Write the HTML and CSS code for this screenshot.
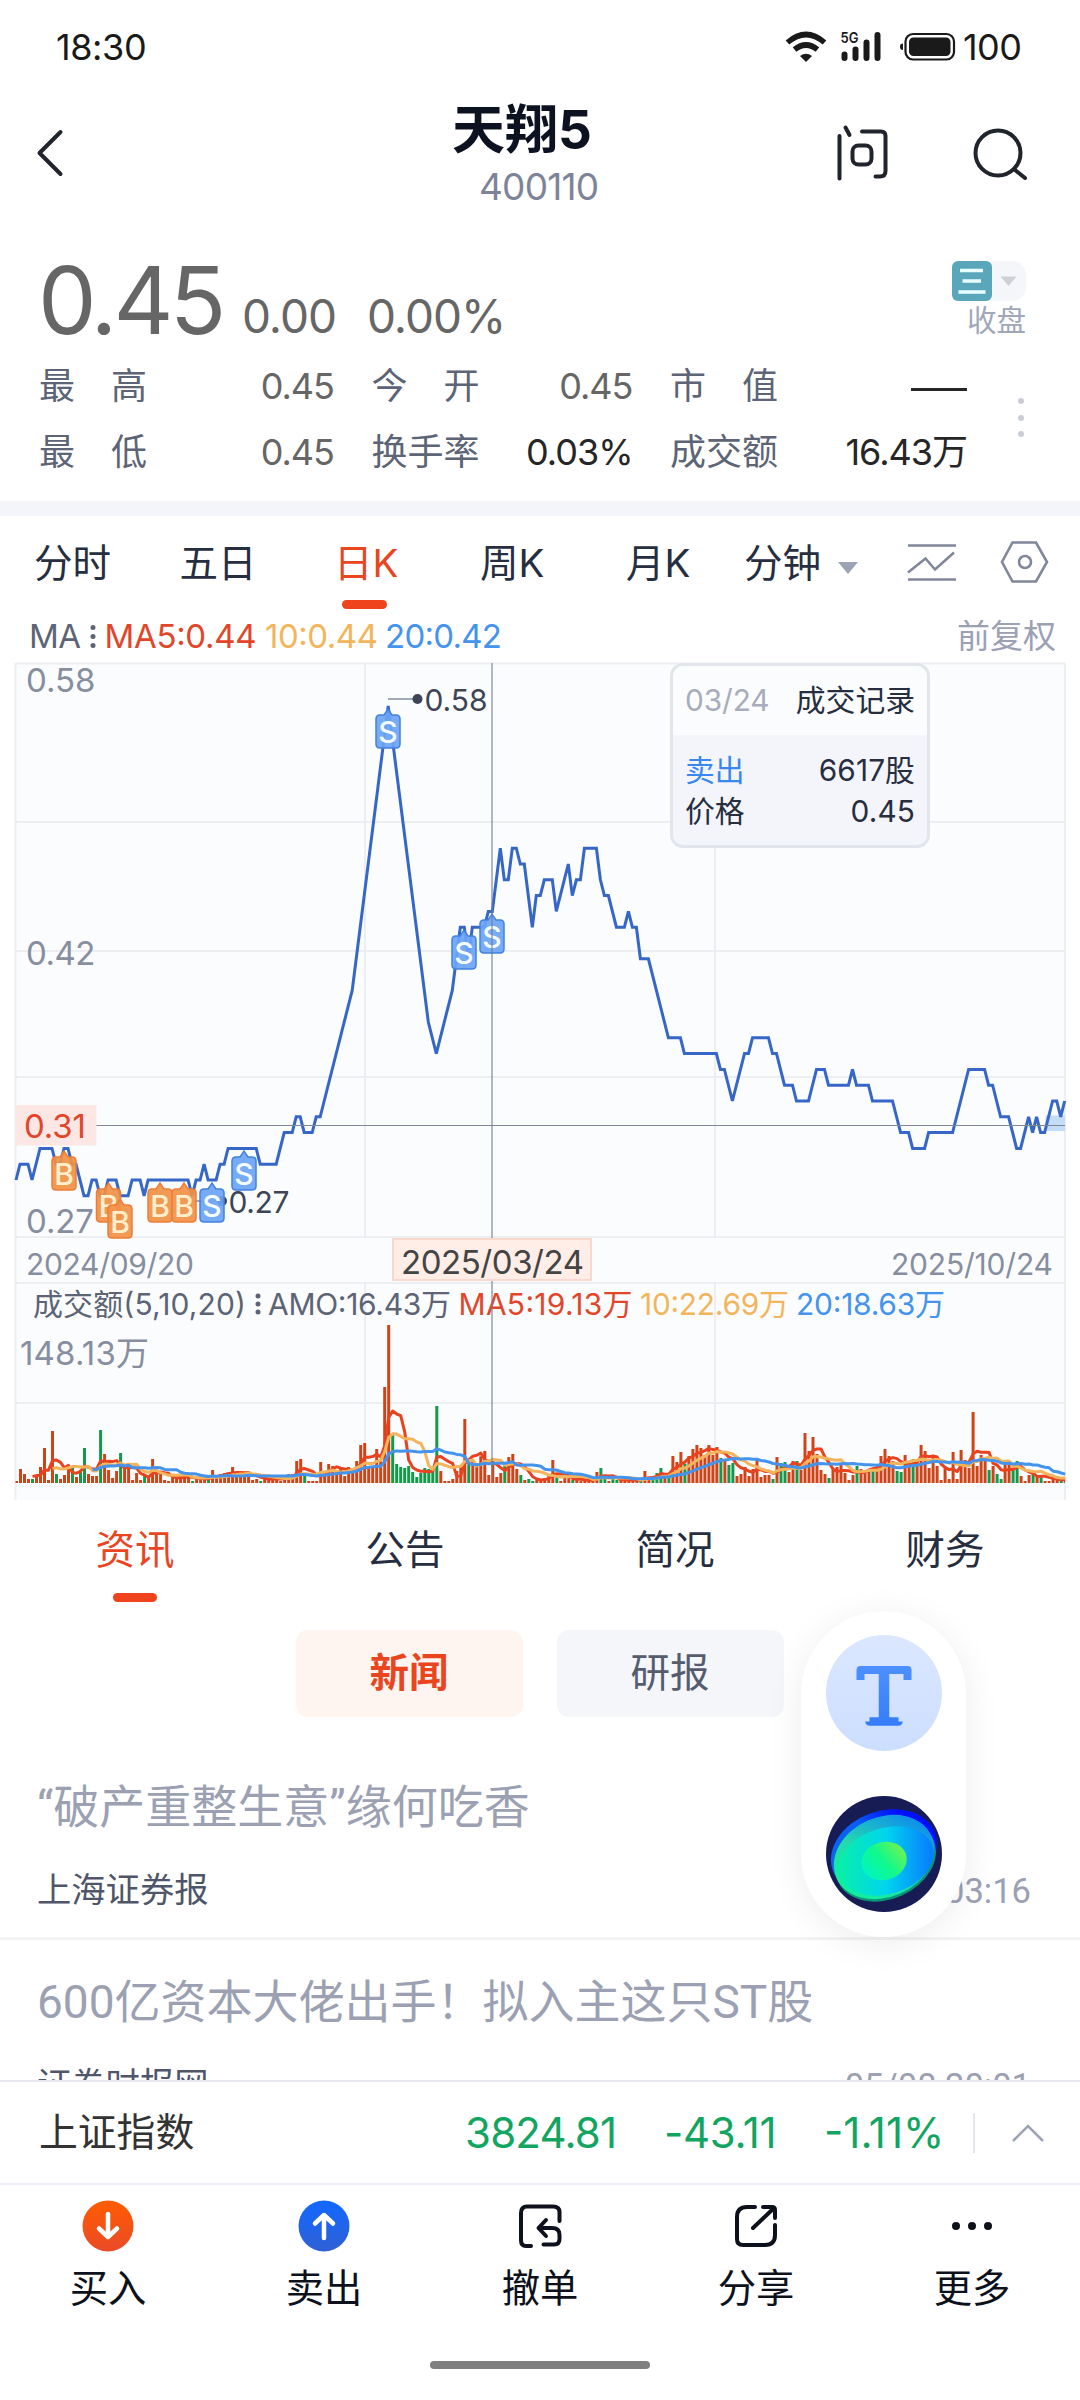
FILE: index.html
```html
<!DOCTYPE html>
<html lang="zh-CN">
<head>
<meta charset="utf-8">
<title>天翔5 400110</title>
<link rel="stylesheet" href="styles.css">
</head>
<body>
<header class="status">
  <span class="clock">18:30</span>
  <svg class="status-icons" viewBox="780 20 180 50" width="180" height="50">
    <g fill="none" stroke="#1a1a1a" stroke-width="5.6">
      <path d="M787.5 41.500Q806 25.500 824.500 41.500"/>
      <path d="M794.500 48.500Q806 39.500 817.500 48.500"/>
    </g>
    <path d="M800 55Q806 50.500 812 55L806 61Z" fill="#1a1a1a"/>
    <text x="840.500" y="42" class="net" textLength="18" lengthAdjust="spacingAndGlyphs">5G</text>
    <g stroke="#1a1a1a" stroke-width="6" stroke-linecap="round">
      <path d="M844.500 53.500V57M855.500 48.500V57M866.500 41.500V57M877.500 34V57"/>
    </g>
    <rect x="905.500" y="33" width="48.500" height="25.500" rx="7.500" fill="none" stroke="#1a1a1a" stroke-width="2.200"/>
    <rect x="909" y="36.500" width="41.500" height="18.500" rx="4.500" fill="#1a1a1a"/>
    <path d="M903 42.500Q900 42.500 900 45.700T903 49Z" fill="#1a1a1a"/>
  </svg>
  <span class="level">100</span>
</header>

<nav class="topbar">
  <svg class="back" viewBox="0 0 30 50" width="30" height="50"><path d="M25.500 4 4.500 25 25.500 46"/></svg>
  <div class="heading">
    <h1>天翔5</h1>
    <p>400110</p>
  </div>
  <svg class="ask" viewBox="0 0 56 60" width="56" height="60">
    <path d="M5.500 13V55.500M11.500 4.500 15.500 12M28 8.500H47Q51.500 8.500 51.500 13V48Q51.500 53.500 46 53.500H41.500"/>
    <rect x="18.500" y="22.500" width="19" height="19" rx="6"/>
  </svg>
  <svg class="search" viewBox="0 0 60 56" width="60" height="56"><circle cx="27" cy="27" r="22.500"/><path d="M43.500 43.500 54 52"/></svg>
</nav>

<section class="quote">
  <div class="price-row">
    <span class="price">0.45</span>
    <span class="change">0.00</span>
    <span class="percent">0.00%</span>
    <div class="market">
      <svg viewBox="0 0 74 40" width="74" height="40">
        <rect x="10" width="64" height="40" rx="14" fill="#f5f6f9"/>
        <rect width="40" height="40" rx="6" fill="#5aa7bb"/>
        <path d="M8 9.500H31M10.500 20H29M6.500 31H33.500" stroke="#e9ffff" stroke-width="3.500"/>
        <path d="M48.500 15.500H64.500L56.500 25Z" fill="#cdd0d6"/>
      </svg>
      <span>收盘</span>
    </div>
  </div>
  <div class="stats-wrap">
    <dl class="stats">
      <div><dt class="spread"><i>最</i><i>高</i></dt><dd>0.45</dd></div>
      <div><dt class="spread"><i>今</i><i>开</i></dt><dd>0.45</dd></div>
      <div><dt class="spread"><i>市</i><i>值</i></dt><dd><b class="dash"></b></dd></div>
      <div><dt class="spread"><i>最</i><i>低</i></dt><dd>0.45</dd></div>
      <div><dt>换手率</dt><dd class="dark">0.03%</dd></div>
      <div><dt>成交额</dt><dd class="dark">16.43万</dd></div>
    </dl>
    <div class="more-dots"><i></i><i></i><i></i></div>
  </div>
</section>

<nav class="periods">
  <a>分时</a><a>五日</a><a class="active">日K</a><a>周K</a><a>月K</a>
  <a class="minutes">分钟<svg viewBox="0 0 20 12" width="20" height="12"><path d="M0 0H20L10 12Z" fill="#9ba3b5"/></svg></a>
  <svg class="indicator" viewBox="0 0 50 42" width="50" height="42"><path d="M1 4.500H49M1 38.500H49M1 31.500 18.500 17.500 28 28.500 47 11.500"/></svg>
  <svg class="settings" viewBox="0 0 50 44" width="50" height="44"><path d="M12.500 2.500H36L47 22 36 41.500H12.500L2 22Z"/><circle cx="25" cy="22" r="6"/></svg>
</nav>

<main>
<div class="chart">
  <svg viewBox="0 616 1080 884" width="1080" height="884">
    <g font-size="33">
      <text x="29" y="648" textLength="52" fill="#5c6475">MA</text>
      <g fill="#5c6475"><circle cx="93" cy="627.500" r="2.500"/><circle cx="93" cy="636.500" r="2.500"/><circle cx="93" cy="645.500" r="2.500"/></g>
      <text x="104.500" y="648" textLength="152" fill="#e2462a">MA5:0.44</text>
      <text x="265" y="648" textLength="113" fill="#f3b55c">10:0.44</text>
      <text x="385" y="648" textLength="117" fill="#4493ec">20:0.42</text>
      <text x="957" y="648" textLength="99" fill="#9ba1b3">前复权</text>
    </g>

    <rect x="15.500" y="663" width="1049.500" height="837" fill="#fbfcfe"/>
    <g class="grid">
      <path d="M15.500 663.500H1065M15.500 663V1500M1065 663V1500" stroke-width="1"/>
      <path d="M15.500 822H1065M15.500 951H1065M15.500 1077H1065M15.500 1237H1065M15.500 1283H1065M15.500 1403H1065"/>
      <path d="M365 664V1237M715 664V1237M365 1283V1483M715 1283V1483"/>
    </g>

    <g fill="#868e9f" font-size="33">
      <text x="26" y="692" textLength="69.500">0.58</text>
      <text x="26" y="964.500" textLength="69.500">0.42</text>
      <text x="26" y="1232.500" textLength="68">0.27</text>
      <text x="20" y="1364.500" textLength="129">148.13万</text>
    </g>
    <g fill="#868e9f" font-size="30">
      <text x="26" y="1274.500" textLength="168">2024/09/20</text>
      <text x="891" y="1274.500" textLength="162">2025/10/24</text>
    </g>

    <rect x="1045.500" y="1115.500" width="19.500" height="15.500" fill="#c3dcf8"/>
    <polyline id="price-line" class="price-line"/>
    <path d="M96 1125.500H1065" stroke="#7f8799" stroke-width="1.200"/>
    <rect x="16" y="1105" width="80.500" height="40.500" fill="#fde7e4"/>
    <text x="24" y="1137.500" textLength="62" font-size="33" fill="#e2462a">0.31</text>

    <path d="M388 699H414M194 1201H222" stroke="#868e9f" stroke-width="1.500"/>
    <g fill="#3d4455" font-size="30">
      <circle cx="417.500" cy="699" r="5"/><text x="424.500" y="711" textLength="63">0.58</text>
      <circle cx="222" cy="1201" r="5"/><text x="228.500" y="1212.500" textLength="61">0.27</text>
    </g>
    <g id="marks"></g>

    <g id="volume"></g>
    <g font-size="30">
      <text x="33" y="1315" textLength="213" fill="#5c6475">成交额(5,10,20)</text>
      <g fill="#5c6475"><circle cx="258" cy="1296" r="2.500"/><circle cx="258" cy="1304" r="2.500"/><circle cx="258" cy="1312" r="2.500"/></g>
      <text x="268" y="1315" textLength="183" fill="#5c6475">AMO:16.43万</text>
      <text x="458.500" y="1315" textLength="174" fill="#e2462a">MA5:19.13万</text>
      <text x="640" y="1315" textLength="149" fill="#f3b55c">10:22.69万</text>
      <text x="796" y="1315" textLength="149" fill="#4493ec">20:18.63万</text>
    </g>

    <rect x="393" y="1239" width="198" height="41" fill="#ffeee7" stroke="#fad8ce" stroke-width="2"/>
    <path d="M492 663V1238M492 1281V1483" stroke="#757d8d" stroke-opacity=".55" stroke-width="2"/>
    <text x="401" y="1273.500" textLength="183" font-size="33" fill="#444">2025/03/24</text>
  </svg>
  <div class="trade-tip">
    <div class="tip-head"><span>03/24</span><b>成交记录</b></div>
    <div class="tip-body">
      <p><em>卖出</em><span>6617股</span></p>
      <p><span>价格</span><span>0.45</span></p>
    </div>
  </div>
</div>

<nav class="sections"><a class="active">资讯</a><a>公告</a><a>简况</a><a>财务</a></nav>
<div class="filters"><a class="active">新闻</a><a>研报</a></div>
<div class="news">
  <article><h2>“破产重整生意”缘何吃香</h2><p><span>上海证券报</span><time>05/08 03:16</time></p></article>
  <article><h2>600亿资本大佬出手！拟入主这只ST股</h2><p><span>证券时报网</span><time>05/08 20:01</time></p></article>
</div>
</main>

<aside class="float">
  <svg viewBox="0 0 116 116" width="116" height="116">
    <defs>
      <linearGradient id="pale" x1="0" y1="0" x2="0" y2="1"><stop offset="0" stop-color="#dbe7ff"/><stop offset="1" stop-color="#ccdeff"/></linearGradient>
      <linearGradient id="azure" gradientUnits="userSpaceOnUse" x1="0" y1="31" x2="0" y2="91"><stop offset="0" stop-color="#4d90ff"/><stop offset="1" stop-color="#357df8"/></linearGradient>
    </defs>
    <circle cx="58" cy="58" r="58" fill="url(#pale)"/>
    <g fill="none" stroke="url(#azure)" stroke-linejoin="round">
      <path d="M34.500 45V35H81.500V45" stroke-width="8"/>
      <path d="M58 35V87" stroke-width="10.500"/>
      <path d="M43.500 86.500V86.600H72.500V86.500" stroke-width="8.500"/>
    </g>
  </svg>
  <svg viewBox="0 0 116 116" width="116" height="116">
    <defs>
      <linearGradient id="rim" x1="0" y1=".6" x2="1" y2=".2"><stop offset="0" stop-color="#0a68ee"/><stop offset=".5" stop-color="#0a5cf5"/><stop offset=".8" stop-color="#0010ff"/></linearGradient>
      <linearGradient id="shell" x1="0" y1=".8" x2="1" y2=".2"><stop offset="0" stop-color="#0cf49a"/><stop offset=".45" stop-color="#25d9ad"/><stop offset="1" stop-color="#0c84f5"/></linearGradient>
      <linearGradient id="body" x1="0" y1=".4" x2="1" y2=".6"><stop offset="0" stop-color="#08f0a6"/><stop offset=".5" stop-color="#00d5ee"/><stop offset="1" stop-color="#0878ff"/></linearGradient>
      <linearGradient id="core" x1="0" y1=".7" x2="1" y2=".3"><stop offset="0" stop-color="#00f5c4"/><stop offset=".5" stop-color="#10f98c"/><stop offset="1" stop-color="#72f250"/></linearGradient>
      <clipPath id="disc"><circle cx="58" cy="58" r="58"/></clipPath>
    </defs>
    <g clip-path="url(#disc)">
      <rect width="116" height="116" fill="#171c55"/>
      <ellipse cx="58" cy="56" rx="54.500" ry="41" transform="rotate(-20 58 56)" fill="url(#rim)"/>
      <ellipse cx="60" cy="65" rx="52" ry="38" transform="rotate(-24 60 65)" fill="#0b9677"/>
      <ellipse cx="58" cy="61" rx="52" ry="40" transform="rotate(-24 58 61)" fill="url(#shell)"/>
      <ellipse cx="60" cy="65" rx="49" ry="33" transform="rotate(-17 60 65)" fill="url(#body)"/>
      <ellipse cx="58" cy="65" rx="23" ry="19" transform="rotate(-15 58 65)" fill="url(#core)"/>
    </g>
  </svg>
</aside>

<footer>
  <div class="index-bar">
    <span class="name">上证指数</span>
    <span class="v1">3824.81</span><span class="v2">-43.11</span><span class="v3">-1.11%</span>
    <i class="sep"></i>
    <svg viewBox="0 0 34 20" width="34" height="20"><path d="M2 18 17 3 32 18" fill="none" stroke="#9ba3b5" stroke-width="2.500"/></svg>
  </div>
  <div class="actions">
    <a><svg viewBox="0 0 52 52"><defs><linearGradient id="buy" x1="0" y1="0" x2="0" y2="1"><stop offset="0" stop-color="#ff5c00"/><stop offset="1" stop-color="#ea4a28"/></linearGradient></defs><circle cx="26" cy="26" r="25.500" fill="url(#buy)"/><path d="M26 14V36M17 28.500 26 37 35 28.500" class="w"/></svg>买入</a>
    <a><svg viewBox="0 0 52 52"><defs><linearGradient id="sell" x1="0" y1="0" x2="0" y2="1"><stop offset="0" stop-color="#1268ff"/><stop offset="1" stop-color="#2f60d4"/></linearGradient></defs><circle cx="26" cy="26" r="25.500" fill="url(#sell)"/><path d="M26 38V16M17 23.500 26 15 35 23.500" class="w"/></svg>卖出</a>
    <a><svg viewBox="0 0 52 52"><path class="k" d="M17 46H12Q7 46 7 40V13Q7 6.500 13 6.500H39Q45.500 6.500 45.500 12V21M32 20 24.500 28 32 36M25 28H38Q45.500 28 45.500 35V39Q45.500 44.500 40 44.500H29.500"/></svg>撤单</a>
    <a><svg viewBox="0 0 52 52"><path class="k" d="M25 7H17Q7 7 7 17V39Q7 45 13 45H35Q45 45 45 35V25M33 7H42Q45 7 45 10V18M44 8 23 28"/></svg>分享</a>
    <a><svg viewBox="0 0 52 52"><circle cx="10" cy="26" r="4" fill="#0d111b"/><circle cx="26" cy="26" r="4" fill="#0d111b"/><circle cx="42" cy="26" r="4" fill="#0d111b"/></svg>更多</a>
  </div>
  <div class="home-bar"></div>
</footer>
<script src="chart.js"></script>
</body>
</html>
```

FILE: styles.css
```css
* { box-sizing: border-box; }
body {
  margin: 0; width: 1080px; height: 2400px; position: relative; overflow: hidden;
  background: #fff; color: #262e40; display: flex; flex-direction: column;
  font-family: Inter, "Noto Sans CJK SC", sans-serif; font-size: 36px; line-height: 1;
}
h1, h2, p, dl, dd { margin: 0; font-weight: 400; }
i, em { font-style: normal; }
svg { display: block; flex: none; }

.status { height: 92px; padding: 0 56px 0 56px; display: flex; align-items: center; color: #1a1a1a; font-size: 36px; flex: none; }
.clock { letter-spacing: -.4px; padding-top: 2px; }
.status-icons { margin-left: auto; }
.level { width: 64px; padding: 1px 0 0 3px; letter-spacing: -.6px; }
.net { font-size: 15px; font-weight: 600; fill: #1a1a1a; }

.topbar { height: 138px; flex: none; display: flex; align-items: flex-start; padding: 0 49px 0 35px; }
.topbar svg { fill: none; stroke: #20242c; stroke-width: 4; stroke-linecap: round; stroke-linejoin: round; }
.back { margin-top: 36px; }
.heading { flex: 1; margin-left: 387px; padding-top: 10px; }
.heading h1 { font-size: 53px; font-weight: 700; line-height: 56px; color: #0c1220; }
.heading p { margin: 9px 0 0 27px; font-size: 37px; line-height: 40px; color: #7d849a; letter-spacing: -.8px; }
.ask { margin: 31px 81px 0 0; }
.search { margin-top: 34px; }

.quote { height: 271px; flex: none; padding: 0 54px 0 40px; }
.price-row { height: 126px; display: flex; align-items: flex-end; color: #666; padding-bottom: 16px; }
.price { font-size: 93px; line-height: 93px; letter-spacing: -3.800px; height: 86px; width: 204px; margin-left: -2px; }
.change, .percent { font-size: 46px; line-height: 46px; letter-spacing: -1px; padding-bottom: 1px; }
.change { width: 125px; }
.market { margin: 0 0 5px auto; display: flex; flex-direction: column; align-items: flex-end; gap: 5px; font-size: 29.500px; color: #a0a7b8; }
.stats-wrap { display: flex; }
.stats { width: 928px; display: grid; grid-template-columns: 295px 261px 297px; column-gap: 37.500px; grid-auto-rows: 66px; margin-left: -1px; }
.stats div { display: flex; justify-content: space-between; align-items: center; padding-top: 7px; height: 52px; }
.stats dt { color: #5c6475; width: 108px; }
.stats .spread { display: flex; justify-content: space-between; }
.stats dd { color: #666; letter-spacing: -1px; display: flex; align-items: center; }
.stats dd.dark { color: #262626; }
.dash { width: 56px; height: 3px; background: #262626; margin-top: 7px; }
.more-dots { margin: 42px 2px 0 auto; width: 6px; display: flex; flex-direction: column; gap: 10.500px; }
.more-dots i { width: 6px; height: 6px; border-radius: 3px; background: #c9cdd8; }

.periods { height: 115px; flex: none; border-top: 15px solid #f4f5fa; padding: 0 30px 0 34px; display: flex; font-size: 38.500px; color: #262e40; }
.periods a { position: relative; width: 146px; height: 100px; padding-top: 28px; }
.periods a:nth-child(-n+2) { width: 145.500px; }
.periods a:nth-child(n+4):nth-child(-n+5) { padding-left: 9px; }
.periods a.minutes { width: 160px; padding-left: 0; margin-left: -19px; display: flex; gap: 17px; }
.minutes svg { margin-top: 18px; }
.active { color: #e9461f; }
.periods .active::after { content: ""; position: absolute; left: 17px; top: 84px; width: 45px; height: 9px; border-radius: 5px; background: #ee431c; }
.periods a.active { padding-left: 9px; }
.indicator { margin: 25px 0 0 auto; }
.settings { margin: 24px 0 0 43px; }
.indicator, .settings { fill: none; stroke: #7f8799; stroke-width: 2.600; }

main { display: contents; }
.chart { position: relative; height: 884px; flex: none; }
.grid path { stroke: #eceef2; stroke-width: 2; fill: none; }
.price-line { fill: none; stroke: #3566c8; stroke-width: 3; stroke-linejoin: miter; }
.chart svg { overflow: visible; }
.mark text { font-size: 30px; font-weight: 500; text-anchor: middle; }
.mark path { stroke-width: 1.500; }
.mark.sell path { fill: #6ba4f5; stroke: #4281e0; fill-opacity: .92; }
.mark.sell text { fill: #f4fbff; }
.mark.buy path { fill: #f09148; stroke: #ef7d35; fill-opacity: .92; }
.mark.buy text { fill: #fff0cd; }
.trade-tip { position: absolute; left: 670px; top: 47px; width: 260px; height: 185px; border: 3px solid #e2e5eb; border-radius: 13px; background: #f4f5fa; overflow: hidden; font-size: 29.800px; }
.tip-head { height: 69px; padding: 0 12px 0 12px; background: #fbfcfe; display: flex; justify-content: space-between; align-items: center; }
.tip-head span { color: #a7adba; letter-spacing: -.1px; }
.tip-head b { font-weight: 400; }
.tip-body { padding: 15px 12px 0 12px; }
.tip-body p { display: flex; justify-content: space-between; line-height: 41px; }
.tip-body p span:last-child { letter-spacing: .1px; }
.tip-body em { color: #3a87ee; }

.sections { height: 130px; flex: none; display: flex; font-size: 39.500px; }
.sections a { width: 270px; text-align: center; padding-top: 31px; position: relative; }
.sections .active::after { content: ""; position: absolute; left: 113px; top: 93px; width: 44px; height: 9px; border-radius: 5px; background: #ee431c; }
.filters { height: 87px; flex: none; display: flex; gap: 34px; padding-left: 296px; font-size: 39.500px; }
.filters a { width: 227px; border-radius: 12px; background: #f4f6fa; color: #545c6e; text-align: center; line-height: 87px; padding-right: 1px; }
.filters .active { background: #fff5f0; color: #e9461f; font-weight: 700; }
.news { height: 363px; flex: none; overflow: hidden; font-family: Roboto, "Noto Sans CJK SC", sans-serif; padding-top: 28px; }
.news article { height: 195px; padding: 39px 49px 0 37px; border-bottom: 3px solid #f3f3f3; }
.news h2 { font-size: 46px; line-height: 46px; color: #9ba1b3; white-space: nowrap; }
.news p { display: flex; justify-content: space-between; margin-top: 43px; font-size: 34.300px; line-height: 34px; color: #4f5669; }
.news time { color: #9ba1b3; font-size: 34.500px; line-height: 36px; }

.float { position: absolute; left: 801px; top: 1611px; width: 165px; height: 326px; border-radius: 83px; background: #fff; box-shadow: 0 6px 36px rgba(0,0,0,.075); display: flex; flex-direction: column; align-items: center; gap: 45px; padding-top: 24px; }

footer { flex: 1; border-top: 2px solid #e7e8ee; background: #fff; }
.index-bar { height: 101px; display: flex; align-items: center; padding-left: 39px; color: #12a562; font-size: 42px; }
.index-bar .name { width: 426px; font-size: 38.800px; color: #333; }
.index-bar .v1 { width: 199px; letter-spacing: -.8px; }
.index-bar .v2 { width: 160px; letter-spacing: -.3px; }
.index-bar .v3 { width: 149px; letter-spacing: 0; }
.sep { width: 2px; height: 40px; background: #e3e6ec; margin-right: 36px; }
.actions { height: 129px; border-top: 2px solid #edf0f6; display: flex; padding-top: 15px; color: #0d111b; font-size: 38.300px; }
.actions a { width: 216px; display: flex; flex-direction: column; align-items: center; gap: 17px; }
.actions svg { width: 52px; height: 52px; }
.w { fill: none; stroke: #fff; stroke-width: 4.500; stroke-linecap: round; stroke-linejoin: round; }
.k { fill: none; stroke: #0d111b; stroke-width: 4; stroke-linecap: round; stroke-linejoin: round; }
.home-bar { width: 220px; height: 8px; border-radius: 4px; background: #808080; margin: 49px auto 0; }
```

FILE: chart.js
```js
const NS = 'http://www.w3.org/2000/svg';
const DAY = 4.0025;
const LEFT = 16;

function add(parent, tag, attrs) {
  const el = document.createElementNS(NS, tag);
  for (const key in attrs) el.setAttribute(key, attrs[key]);
  parent.appendChild(el);
  return el;
}

// Turning points of the close: day index, ticks above the low.
const closes = '0,1 1,2 3,2 4,1 6,3 9,3 10,2 11,2 12,3 13,3 14,2 15,2 17,0 18,0 19,1 20,1 21,0 22,0 23,1 25,1 26,0 28,0 29,1 31,1 32,0 33,1 43,1 44,0 45,1 46,1 47,2 48,1 50,1 51,2 52,2 53,3 60,3 61,2 65,2 67,4 69,4 70,5 71,5 72,4 74,4 75,5 76,5 77,6 84,13 93,31 103,11 105,9 109,13 111,17 112,17 113,15 114,17 117,17 118,18 119,18 121,22 122,20 123,20 124,22 125,22 126,21 127,21 129,17 130,19 131,19 132,20 134,20 135,18 138,21 139,19 140,20 141,20 142,22 145,22 146,20 147,19 148,19 150,17 152,17 153,18 154,17 155,17 156,15 158,15 163,10 166,10 167,9 175,9 176,8 177,8 179,6 182,9 183,9 184,10 188,10 189,9 190,9 192,7 194,7 195,6 198,6 200,8 202,8 203,7 208,7 209,8 210,7 213,7 214,6 219,6 221,4 223,4 224,3 227,3 228,4 234,4 238,8 242,8 243,7 244,7 246,5 248,5 250,3 251,3 253,5 254,4 255,5 256,4 257,4 259,6 260,6 261,5 262,6';
document.getElementById('price-line').setAttribute('points', closes.split(' ').map(p => {
  const [day, tick] = p.split(',').map(Number);
  return (LEFT + day * DAY).toFixed(1) + ',' + (1195.8 - tick * 15.8).toFixed(1);
}).join(' '));

// Trades: side, centre x, top of the badge.
const trades = [['B', 64, 1157], ['B', 108.5, 1189], ['B', 120, 1205], ['B', 160, 1189], ['B', 184, 1189],
  ['S', 212, 1189], ['S', 244, 1157], ['S', 388, 715], ['S', 464, 936], ['S', 492, 920]];
const marks = document.getElementById('marks');
for (const [side, x, y] of trades) {
  const g = add(marks, 'g', { class: 'mark ' + (side === 'B' ? 'buy' : 'sell'), transform: `translate(${x} ${y})` });
  add(g, 'path', { d: 'M-8 0H-4L0 -6L4 0H8Q12 0 12 4V29Q12 33 8 33H-8Q-12 33 -12 29V4Q-12 0 -8 0Z' });
  add(g, 'text', { x: 0, y: 27.5 }).textContent = side;
}

// Daily turnover; a trailing g marks a falling day.
const turnover = '6 42 27 12 12g 18 48 105 9 156 27g 12 24 45 48g 18 39g 105g 27 21 21 159g 87 39 15 36 90g 48 48 9 30 9 22g 15 72 30 28 9 6 21 20 20 18 18 6g 15 15 15 9g 39 20 27 30 27 48 24 27 27 33 9 12 6g 15 15 12 12 6 18 27 27 66 72 24g 6 6 6 63 33 57 51 39 42 21 48 39 66 114 120 48 48 102 72 288 474 144g 57g 48g 45g 51g 33g 18g 30g 45g 42g 42g 231g 36 6 6 12 36 48 192 60g 66 50 80 96 24 60 18 30 54g 78 87 42 24g 9 12g 6g 9 9 15 27 69 18g 6 15 15 9g 12 6 6 9 9 33 45g 12g 6 12g 9g 9 9 9 9 9 6g 36 18 12g 30g 45g 27 20g 81 63 93 57g 81 102 114 105 84 114 84 108 75g 66 54g 60g 21 27 48 21 42 69 18 24 24 12g 78 60g 63g 33 66 66g 39 150 96 138 87 39 27 15g 42 48 54 30 9 24 51g 42 36 42 45g 51 81 102 81 66 36g 33g 84 60 72g 66 114 96 45 84 51 9 45 12 93 12 99 69 45 213 51 84 69 39g 51 27g 12g 60 54 48g 66g 21 6 24 30g 18 24g 6 6 15 12 9g 6'.split(' ');
const values = turnover.map(v => parseInt(v, 10) / 3);
const volume = document.getElementById('volume');
const BASE = 1483;
values.forEach((h, i) => {
  const x = LEFT + i * DAY;
  const left = Math.max(x - 1, 15.5);
  add(volume, 'rect', {
    x: left.toFixed(1), y: (BASE - h).toFixed(1), width: Math.min(3, x + 2 - left, 1065 - left).toFixed(1), height: h.toFixed(1),
    fill: turnover[i].endsWith('g') ? '#14994a' : '#ce4419'
  });
});
for (const [span, color] of [[5, '#e8421f'], [10, '#f4b45c'], [20, '#4493ec']]) {
  const points = [];
  for (let i = span - 1; i < values.length; i++) {
    const mean = values.slice(i - span + 1, i + 1).reduce((a, b) => a + b, 0) / span;
    points.push((LEFT + .5 + i * DAY).toFixed(1) + ',' + (BASE - mean).toFixed(1));
  }
  add(volume, 'polyline', { points: points.join(' '), fill: 'none', stroke: color, 'stroke-width': 3, 'stroke-linejoin': 'round' });
}
```
